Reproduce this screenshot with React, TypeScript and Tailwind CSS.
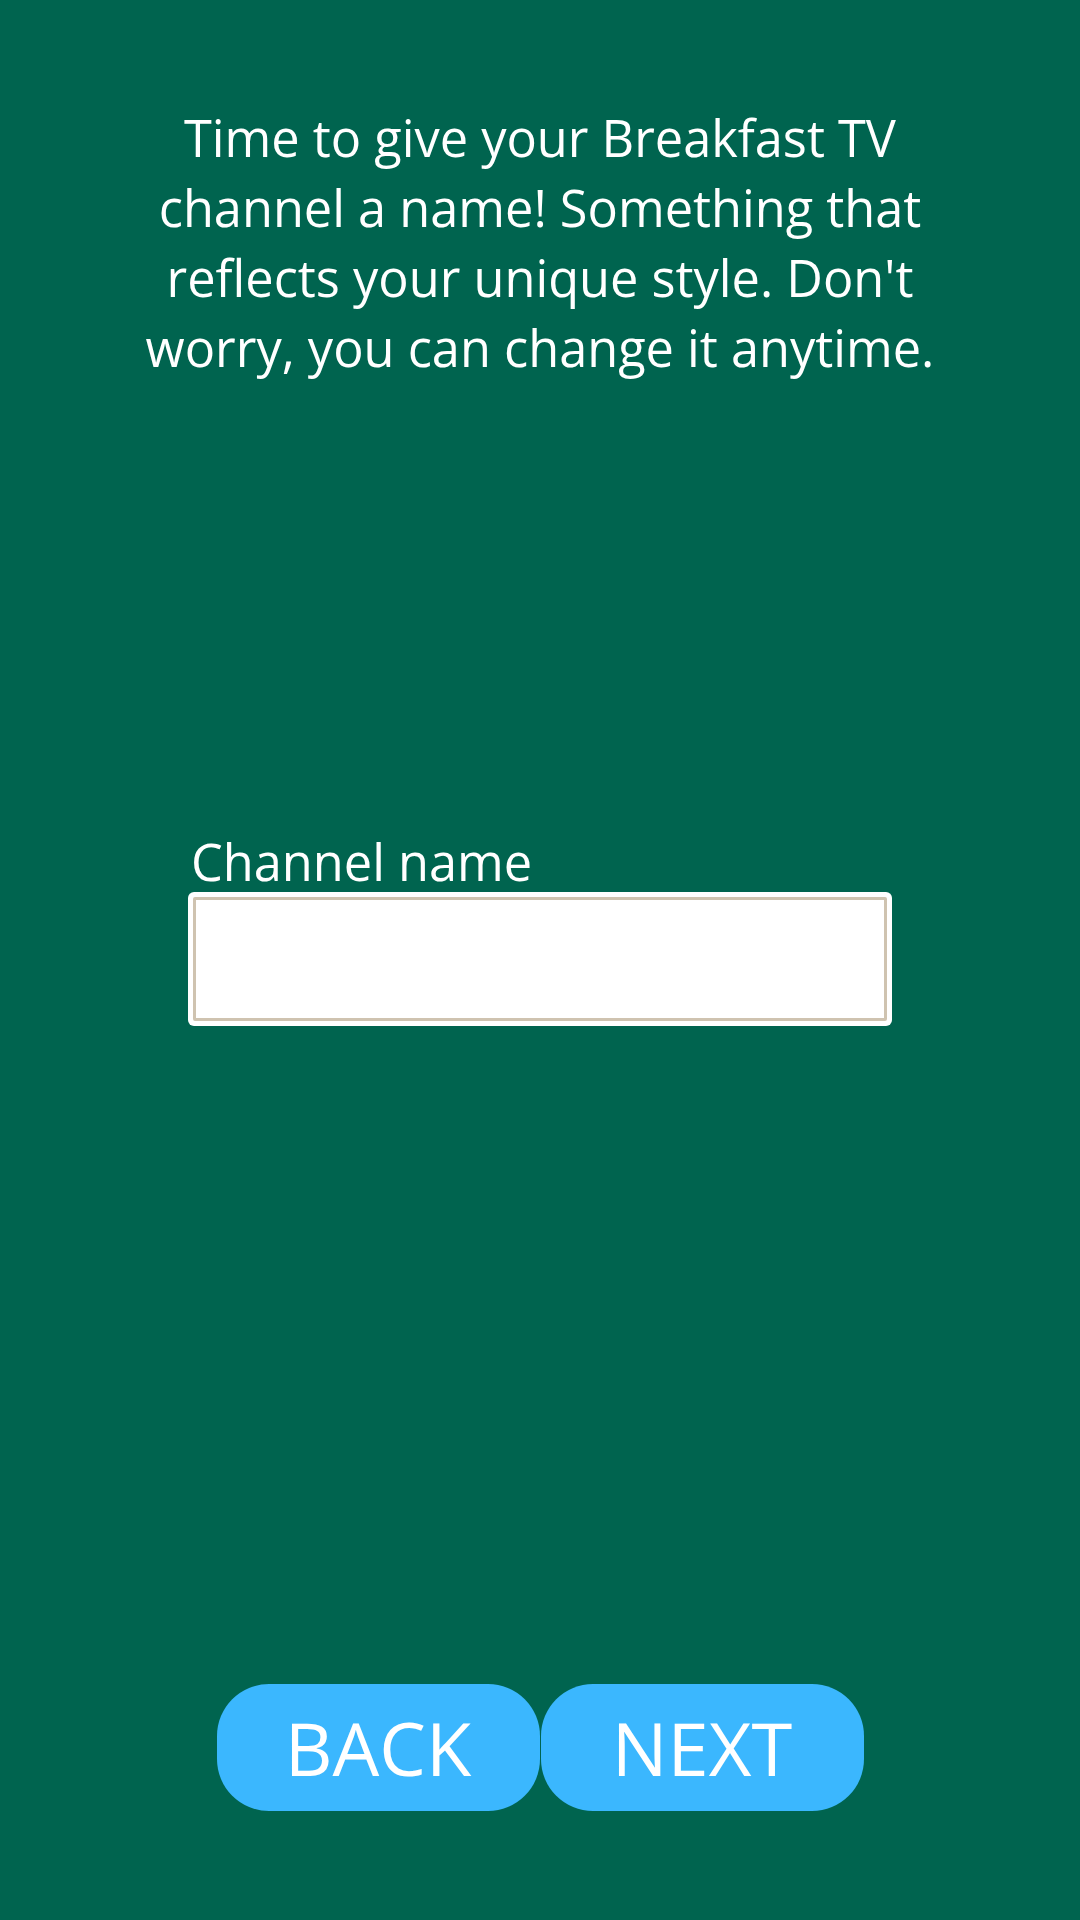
import React, { useState } from 'react';

export default function App() {
  const [name, setName] = useState('');

  return (
    <div className="flex h-[1920px] w-full flex-col items-center bg-[#00644f] text-white [font-family:'Open_Sans',sans-serif]">
      <p className="mt-[103px] w-[830px] text-center text-[50.5px] leading-[70px]">
        Time to give your Breakfast TV channel a name! Something that reflects your unique style. Don't worry, you can
        change it anytime.
      </p>

      <div className="mt-[449px] w-[704px]">
        <label htmlFor="channel" className="block pl-[3px] text-[50.5px] leading-[60px]">
          Channel name
        </label>
        <div className="h-[134px] rounded-[6px] bg-white p-[5px]">
          <input
            id="channel"
            value={name}
            onChange={(e) => setName(e.target.value)}
            className="h-full w-full rounded-[2px] border-[3px] border-[#cfc3b0] bg-white px-3 text-[40px] text-black outline-none"
          />
        </div>
      </div>

      <div className="mt-[658px] flex gap-px">
        <button className="flex h-[127px] w-[323px] items-center justify-center rounded-[52px] bg-[#3bb7fe] text-[74px] text-white">
          BACK
        </button>
        <button className="flex h-[127px] w-[323px] items-center justify-center rounded-[52px] bg-[#3bb7fe] text-[74px] text-white">
          NEXT
        </button>
      </div>
    </div>
  );
}
